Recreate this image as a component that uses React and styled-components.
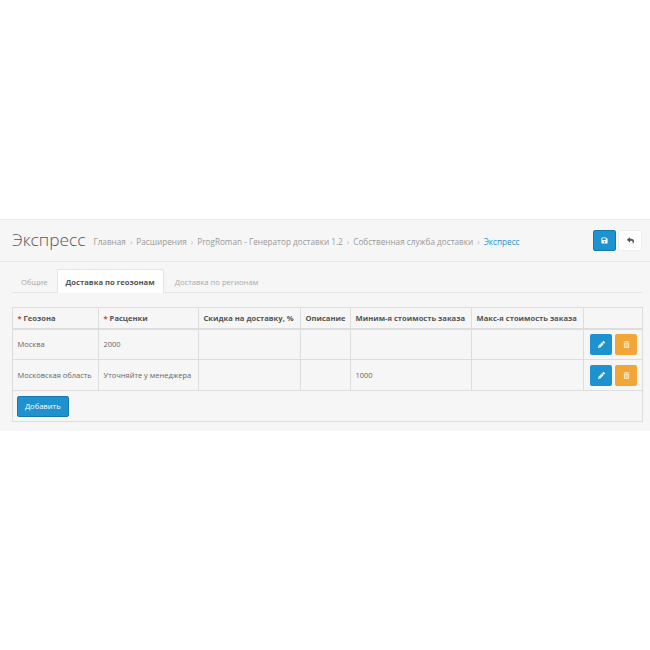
import React from "react";
import styled, { createGlobalStyle } from "styled-components";
import { FaPencilAlt, FaTrashAlt, FaReply, FaSave } from "react-icons/fa";

const App = () => {
  return (
    <>
      <GlobalStyle />
      <Page>
        <Panel>
          <Header>
            <Title>Экспресс</Title>
            <Breadcrumb>
              <Crumb>Главная</Crumb>
              <Crumb>Расширения</Crumb>
              <Crumb>ProgRoman - Генератор доставки 1.2</Crumb>
              <Crumb>Собственная служба доставки</Crumb>
              <Crumb $current>Экспресс</Crumb>
            </Breadcrumb>
            <Actions>
              <HeaderButton $primary>
                <FaSave />
              </HeaderButton>
              <HeaderButton>
                <FaReply />
              </HeaderButton>
            </Actions>
          </Header>
          <Content>
            <Tabs>
              <Tab>Общие</Tab>
              <Tab $active>Доставка по геозонам</Tab>
              <Tab>Доставка по регионам</Tab>
            </Tabs>
            <Table>
              <colgroup>
                {widths.map((w, i) => (
                  <col key={i} width={w} />
                ))}
              </colgroup>
              <thead>
                <tr>
                  <Th>
                    <Req>*</Req> Геозона
                  </Th>
                  <Th>
                    <Req>*</Req> Расценки
                  </Th>
                  <Th>Скидка на доставку, %</Th>
                  <Th>Описание</Th>
                  <Th>Миним-я стоимость заказа</Th>
                  <Th>Макс-я стоимость заказа</Th>
                  <Th />
                </tr>
              </thead>
              <tbody>
                {rows.map((row) => (
                  <tr key={row.zone}>
                    <Td>{row.zone}</Td>
                    <Td>{row.price}</Td>
                    <Td />
                    <Td />
                    <Td>{row.min}</Td>
                    <Td />
                    <ActionCell>
                      <RowActions>
                        <RowButton $color="#1e91cf">
                          <FaPencilAlt />
                        </RowButton>
                        <RowButton $color="#f3a638">
                          <FaTrashAlt />
                        </RowButton>
                      </RowActions>
                    </ActionCell>
                  </tr>
                ))}
                <tr>
                  <FooterCell colSpan={7}>
                    <AddButton>Добавить</AddButton>
                  </FooterCell>
                </tr>
              </tbody>
            </Table>
          </Content>
        </Panel>
      </Page>
    </>
  );
};

const widths = [86, 100, 102, 50, 121, 112, 59];

const rows = [
  { zone: "Москва", price: "2000", min: "" },
  { zone: "Московская область", price: "Уточняйте у менеджера", min: "1000" },
];

const GlobalStyle = createGlobalStyle`
  html, body {
    margin: 0;
    padding: 0;
    background: #fff;
    font-family: "Open Sans", "Liberation Sans", sans-serif;
  }
`;

const Page = styled.div`
  width: 650px;
  height: 650px;
  padding-top: 219px;
  box-sizing: border-box;
  overflow: hidden;
`;

const Panel = styled.div`
  height: 212px;
  background: #f6f6f6;
  border-top: 1px solid #ececec;
  box-sizing: border-box;
`;

const Header = styled.div`
  height: 41px;
  display: flex;
  align-items: center;
  padding: 0 8px 0 12px;
  border-bottom: 1px solid #e8e8e8;
`;

const Title = styled.h1`
  margin: 0 8px 0 0;
  font-size: 17.3px;
  font-weight: 300;
  line-height: 41px;
  color: #555;
  position: relative;
  top: -1px;
`;

const Breadcrumb = styled.div`
  display: flex;
  align-items: center;
  font-size: 8.2px;
  color: #999;
  flex: 1;
  margin-top: 2px;
`;

const Crumb = styled.span`
  color: ${(p) => (p.$current ? "#1e91cf" : "#999")};

  &:not(:last-child)::after {
    content: "›";
    margin: 0 4px;
    color: #bbb;
  }
`;

const Actions = styled.div`
  display: flex;
  gap: 2px;
`;

const HeaderButton = styled.div`
  width: ${(p) => (p.$primary ? "23px" : "24px")};
  height: 21px;
  display: flex;
  align-items: center;
  justify-content: center;
  box-sizing: border-box;
  border-radius: 2px;
  font-size: 7px;
  background: ${(p) => (p.$primary ? "#1e91cf" : "#fff")};
  color: ${(p) => (p.$primary ? "#fff" : "#555")};
  border: 1px solid ${(p) => (p.$primary ? "#1978ab" : "#eee")};
`;

const Content = styled.div`
  padding: 7px 8px 0 12px;
`;

const Tabs = styled.div`
  height: 23px;
  display: flex;
  align-items: stretch;
  border-bottom: 1px solid #e6e6e6;
  margin-bottom: 14px;
`;

const Tab = styled.div`
  padding: 0 8px;
  margin-right: ${(p) => (p.$active ? "2px" : "0")};
  display: flex;
  align-items: center;
  font-size: 7.65px;
  font-weight: ${(p) => (p.$active ? 700 : 400)};
  color: ${(p) => (p.$active ? "#555" : "#aaa")};
  background: ${(p) => (p.$active ? "#fff" : "transparent")};
  border: 1px solid ${(p) => (p.$active ? "#e6e6e6" : "transparent")};
  border-bottom: 0;
  border-radius: 2px 2px 0 0;
  height: 24px;
  box-sizing: border-box;
`;

const Table = styled.table`
  width: 630px;
  table-layout: fixed;
  border-collapse: collapse;
  border: 1px solid #ddd;
  font-size: 7.5px;
  color: #666;
`;

const Th = styled.th`
  height: 21px;
  padding: 0 4px 0 4.5px;
  box-sizing: border-box;
  text-align: left;
  font-size: 7.6px;
  font-weight: 700;
  color: #555;
  border: 1px solid #ddd;
  border-bottom-width: 2px;
  white-space: nowrap;
`;

const Req = styled.span`
  color: #e33;
`;

const Td = styled.td`
  height: 31px;
  padding: 0 4px 0 4.5px;
  box-sizing: border-box;
  border: 1px solid #ddd;
  white-space: nowrap;
`;

const ActionCell = styled(Td)`
  padding: 0 4px 0 6px;
`;

const RowActions = styled.div`
  display: flex;
  gap: 3px;
`;

const RowButton = styled.div`
  width: 22px;
  height: 21px;
  display: flex;
  align-items: center;
  justify-content: center;
  border-radius: 2px;
  font-size: 7px;
  color: ${(p) => (p.$color === "#1e91cf" ? "#fff" : "#fbe3bd")};
  background: ${(p) => p.$color};
`;

const FooterCell = styled.td`
  height: 31px;
  padding: 0 4px;
  box-sizing: border-box;
`;

const AddButton = styled.div`
  width: 51.5px;
  height: 21px;
  display: flex;
  align-items: center;
  justify-content: center;
  border-radius: 2px;
  font-size: 7.6px;
  color: #fff;
  background: #1e91cf;
  border: 1px solid #1978ab;
  box-sizing: border-box;
`;

export default App;
